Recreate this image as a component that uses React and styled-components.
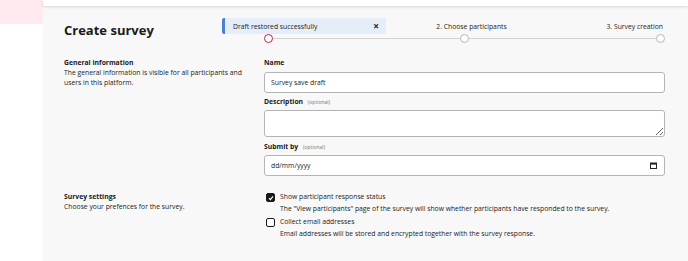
import React from "react";
import styled, { createGlobalStyle } from "styled-components";

const GlobalStyle = createGlobalStyle`
  * { box-sizing: border-box; }
  html, body {
    margin: 0;
    padding: 0;
    background: #ffffff;
    font-family: "Open Sans", "Liberation Sans", sans-serif;
    color: #222;
  }
`;

export default function App() {
  return (
    <>
      <GlobalStyle />
      <Page>
        <Sidebar>
          <ActiveItem />
        </Sidebar>
        <Main>
          <TopBar />
          <Content>
            <Header>
              <Title>Create survey</Title>
              <Stepper>
                <Toast>
                  <span>Draft restored successfully</span>
                  <Close>×</Close>
                </Toast>
                <Step $align="flex-start">
                  <StepLabel />
                  <Dot $active />
                </Step>
                <Step $align="center">
                  <StepLabel $shift={7}>2. Choose participants</StepLabel>
                  <Dot />
                </Step>
                <Step $align="flex-end">
                  <StepLabel $shift={-2}>3. Survey creation</StepLabel>
                  <Dot />
                </Step>
              </Stepper>
            </Header>

            <Section>
              <Intro>
                <SectionTitle>General information</SectionTitle>
                <Text>
                  The general information is visible for all participants and
                  users in this platform.
                </Text>
              </Intro>
              <Fields>
                <Label>Name</Label>
                <Input defaultValue="Survey save draft" />
                <Label $gap>
                  Description <Optional>(optional)</Optional>
                </Label>
                <TextArea />
                <Label $gap $wide>
                  Submit by <Optional>(optional)</Optional>
                </Label>
                <DateBox>
                  <span>dd/mm/yyyy</span>
                  <svg width="7" height="7" viewBox="0 0 7 7">
                    <rect x="0.5" y="1" width="6" height="5.5" fill="none" stroke="#222" strokeWidth="1" />
                    <rect x="0.5" y="1" width="6" height="1.6" fill="#222" />
                  </svg>
                </DateBox>
              </Fields>
            </Section>

            <Section $top={16}>
              <Intro>
                <SectionTitle>Survey settings</SectionTitle>
                <Text>Choose your prefences for the survey.</Text>
              </Intro>
              <Fields>
                <Option>
                  <Box $checked>
                    <svg width="6" height="6" viewBox="0 0 6 6">
                      <path d="M1 3.2 L2.4 4.6 L5 1.4" fill="none" stroke="#fff" strokeWidth="1.2" />
                    </svg>
                  </Box>
                  <OptionBody>
                    <OptionLabel>Show participant response status</OptionLabel>
                    <Text>
                      The "View participants" page of the survey will show whether participants have responded to the survey.
                    </Text>
                  </OptionBody>
                </Option>
                <Option $gap>
                  <Box />
                  <OptionBody>
                    <OptionLabel>Collect email addresses</OptionLabel>
                    <Text>
                      Email addresses will be stored and encrypted together with the survey response.
                    </Text>
                  </OptionBody>
                </Option>
              </Fields>
            </Section>
          </Content>
        </Main>
      </Page>
    </>
  );
}

const Page = styled.div`
  display: flex;
  width: 688px;
  height: 261px;
  overflow: hidden;
`;

const Sidebar = styled.div`
  width: 43px;
  flex-shrink: 0;
  background: #fff;
`;

const ActiveItem = styled.div`
  height: 24px;
  background: #fde9ee;
`;

const Main = styled.div`
  flex: 1;
  background: #f8f8f8;
  display: flex;
  flex-direction: column;
`;

const TopBar = styled.div`
  height: 6px;
  background: #fff;
  box-shadow: 0 1px 3px rgba(0, 0, 0, 0.14);
  position: relative;
  z-index: 1;
`;

const Content = styled.div`
  padding: 0 23px 0 21px;
`;

const Header = styled.div`
  display: flex;
  align-items: flex-start;
  padding-top: 12px;
`;

const Title = styled.h1`
  margin: 0;
  font-size: 13px;
  line-height: 24px;
  font-weight: 700;
  color: #1a1a1a;
`;

const Stepper = styled.div`
  position: relative;
  margin-left: auto;
  width: 401px;
  display: grid;
  grid-template-columns: 1fr 1fr 1fr;

  &::before {
    content: "";
    position: absolute;
    left: 4px;
    right: 5px;
    top: 20px;
    height: 1px;
    background: #d2d2d2;
  }
`;

const Step = styled.div`
  display: flex;
  flex-direction: column;
  align-items: ${(p) => p.$align};
`;

const StepLabel = styled.div`
  margin-top: 4px;
  height: 10px;
  font-size: 6.8px;
  line-height: 10px;
  color: #222;
  white-space: nowrap;
  transform: translateX(${(p) => p.$shift || 0}px);
`;

const Dot = styled.div`
  position: relative;
  width: 9px;
  height: 9px;
  margin-top: 2px;
  border-radius: 50%;
  background: #fff;
  border: ${(p) => (p.$active ? "1.5px solid #c8185a" : "1px solid #b8b8b8")};
`;

const Toast = styled.div`
  position: absolute;
  z-index: 2;
  left: -42px;
  top: 0;
  width: 164px;
  height: 16px;
  padding: 0 7px 0 8px;
  display: flex;
  align-items: center;
  justify-content: space-between;
  background: #e5edf9;
  border-left: 3px solid #4a7fd6;
  border-radius: 2px;
  font-size: 6.8px;
  color: #222;
`;

const Close = styled.span`
  font-size: 10px;
  font-weight: 700;
  line-height: 10px;
`;

const Section = styled.div`
  display: grid;
  grid-template-columns: 190px 1fr;
  column-gap: 10px;
  margin-top: ${(p) => (p.$top ? p.$top : 15)}px;
`;

const Intro = styled.div`
  display: flex;
  flex-direction: column;
`;

const SectionTitle = styled.div`
  font-size: 6.8px;
  line-height: 10px;
  font-weight: 700;
  color: #1a1a1a;
`;

const Text = styled.div`
  font-size: 6.8px;
  line-height: 10px;
  color: #222;
`;

const Fields = styled.div`
  display: flex;
  flex-direction: column;
`;

const Label = styled.div`
  font-size: 6.8px;
  line-height: 10px;
  font-weight: 700;
  color: #1a1a1a;
  margin-top: ${(p) => (p.$wide ? 5 : p.$gap ? 4 : 0)}px;
  margin-bottom: ${(p) => (p.$gap ? 3 : 4)}px;
`;

const Optional = styled.span`
  font-size: 5px;
  font-weight: 400;
  color: #777;
  margin-left: 3px;
`;

const Input = styled.input`
  height: 21px;
  width: 100%;
  padding: 0 6px;
  border: 1px solid #b5b5b5;
  border-radius: 3px;
  background: #fff;
  font-family: inherit;
  font-size: 6.8px;
  color: #222;
  outline: none;
`;

const TextArea = styled.textarea`
  display: block;
  height: 27px;
  width: 100%;
  border: 1px solid #b5b5b5;
  border-radius: 3px;
  background: #fff;
  font-family: inherit;
  outline: none;
`;

const DateBox = styled.div`
  height: 21px;
  display: flex;
  align-items: center;
  justify-content: space-between;
  padding: 0 7px 0 6px;
  border: 1px solid #b5b5b5;
  border-radius: 3px;
  background: #fff;
  font-size: 6.8px;
  color: #222;
`;

const Option = styled.div`
  display: flex;
  align-items: flex-start;
  gap: 5px;
  margin-top: ${(p) => (p.$gap ? 3 : 0)}px;
`;

const Box = styled.div`
  width: 9px;
  height: 9px;
  margin: 1px 0 0 2px;
  flex-shrink: 0;
  display: flex;
  align-items: center;
  justify-content: center;
  border-radius: 2px;
  border: 1.3px solid #1a1a1a;
  background: ${(p) => (p.$checked ? "#1a1a1a" : "#fff")};
`;

const OptionBody = styled.div`
  display: flex;
  flex-direction: column;
  gap: 2px;
`;

const OptionLabel = styled.div`
  font-size: 6.8px;
  line-height: 10px;
  color: #1a1a1a;
`;
